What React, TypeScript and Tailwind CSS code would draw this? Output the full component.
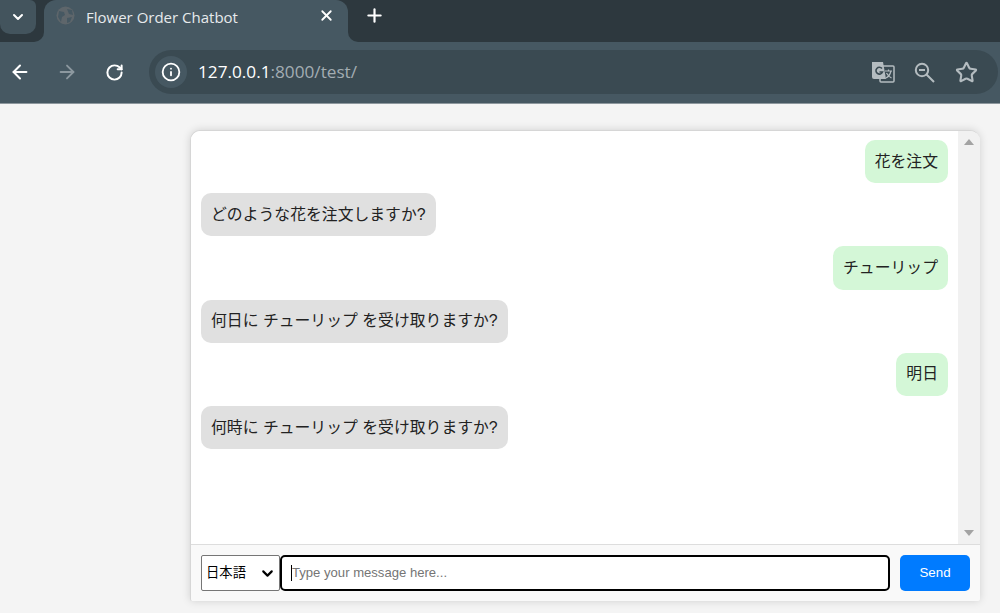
import { ArrowLeft, ArrowRight, ChevronDown, Info, Plus, RotateCw, Star, X } from "lucide-react";

type Message = {
  text: string;
  mine: boolean;
};

const messages: Message[] = [
  { text: "花を注文", mine: true },
  { text: "どのような花を注文しますか?", mine: false },
  { text: "チューリップ", mine: true },
  { text: "何日に チューリップ を受け取りますか?", mine: false },
  { text: "明日", mine: true },
  { text: "何時に チューリップ を受け取りますか?", mine: false },
];

function TranslateIcon() {
  return (
    <svg width="24" height="24" viewBox="0 0 24 24">
      <rect x="9" y="6" width="14" height="16" rx="1" fill="none" stroke="#b4bcc0" strokeWidth="1.5" />
      <path d="M1 2h11l3 17H3a2 2 0 0 1-2-2z" fill="#b4bcc0" />
      <path d="M11 8.5A3.4 3.4 0 1 0 11.5 12H8.5" fill="none" stroke="#3a4a52" strokeWidth="1.6" />
      <path d="M14 11h7M17.5 9.5v1.5M20 11c-1 4-3 6-5 7M15.5 13c1 2 3 4 5 5" fill="none" stroke="#b4bcc0" strokeWidth="1.2" />
    </svg>
  );
}

function ZoomOutIcon() {
  return (
    <svg width="23" height="23" viewBox="0 0 23 23" className="ml-[18px]" fill="none" stroke="#b4bcc0" strokeWidth="2">
      <circle cx="9" cy="9" r="6.2" />
      <path d="M6 9h6M13.5 13.5l7.5 7.5" />
    </svg>
  );
}

function ChromeBar() {
  return (
    <header className="shrink-0 font-['Open_Sans',sans-serif]">
      <div className="flex h-[42px] bg-[#2d383e]">
        <div className="flex h-[34px] w-[36px] items-center justify-center rounded-b-[10px] rounded-tr-[6px] bg-[#43545d] text-white">
          <ChevronDown size={16} strokeWidth={3} />
        </div>
        <div className="relative ml-2 flex h-[42px] w-[304px] items-center rounded-t-[12px] bg-[#465862] pb-[11px] pl-[12px] pr-[13px]">
          <span className="absolute bottom-0 left-[-10px] h-[10px] w-[10px] bg-[#465862]">
            <span className="block h-full w-full rounded-br-[10px] bg-[#2d383e]" />
          </span>
          <span className="absolute bottom-0 right-[-10px] h-[10px] w-[10px] bg-[#465862]">
            <span className="block h-full w-full rounded-bl-[10px] bg-[#2d383e]" />
          </span>
          <svg width="19" height="19" viewBox="0 0 19 19">
            <circle cx="9.5" cy="9.5" r="9" fill="#5e666b" />
            <path d="M3 5l5 1 1 3-3 2-1 5-3-5zM11 3l5 1 1 5-4-1zM11 12l5-1-2 5-3 1z" fill="#465862" />
          </svg>
          <span className="ml-[11px] mt-[3px] flex-1 text-[15px] text-[#e6eaec]">Flower Order Chatbot</span>
          <X size={17} color="#ffffff" strokeWidth={2.5} />
        </div>
        <div className="ml-[16px] flex items-center pb-[12px] text-white">
          <Plus size={21} strokeWidth={2.5} />
        </div>
      </div>
      <div className="flex h-[61px] items-center bg-[#465862] pb-[1px]">
        <div className="flex w-[149px] items-center pl-[9px]">
          <ArrowLeft size={22} color="#ffffff" strokeWidth={2.2} />
          <ArrowRight size={22} color="#8c989f" strokeWidth={2} className="ml-[25px]" />
          <RotateCw size={19} color="#ffffff" strokeWidth={2.5} className="ml-[27px]" />
        </div>
        <div className="mr-[2px] flex h-[44px] flex-1 items-center rounded-[22px] bg-[#3a4a52] pl-[6px] pr-[20px]">
          <div className="flex h-[32px] w-[32px] items-center justify-center rounded-full bg-[#465862]">
            <Info size={20} color="#ffffff" strokeWidth={2.2} />
          </div>
          <span className="ml-[11px] flex-1 text-[17.2px] text-white">
            127.0.0.1<span className="text-[#a3adb2]">:8000/test/</span>
          </span>
          <TranslateIcon />
          <ZoomOutIcon />
          <Star size={23} color="#b4bcc0" strokeWidth={2.2} className="ml-[19px]" />
        </div>
      </div>
      <div className="h-[1px] bg-[#8d979d]" />
    </header>
  );
}

export default function App() {
  return (
    <div className="flex h-[613px] w-[1000px] flex-col overflow-hidden bg-[#f4f4f4] font-['Liberation_Sans','Noto_Sans_CJK_JP',sans-serif]">
      <ChromeBar />
      <main className="flex flex-1 justify-end pb-[12px] pr-[20px] pt-[26px]">
        <div className="flex w-[790px] flex-col overflow-hidden rounded-b-[2px] rounded-t-[10px] border-l border-t border-[#d6d6d6] bg-[#f9f9f9] shadow-[0_0_8px_rgba(0,0,0,0.15)]">
          <div className="flex min-h-0 flex-1 border-b border-[#dddddd]">
            <div className="flex flex-1 flex-col gap-[10px] bg-white py-[9px] pl-[10px] pr-[10px]">
              {messages.map((msg) => (
                <div key={msg.text} className={msg.mine ? "flex justify-end" : "flex justify-start"}>
                  <div
                    className={`flex h-[43.2px] items-center rounded-[10px] px-[10px] text-[15.84px] text-[#222222] ${
                      msg.mine ? "bg-[#d4f7d7]" : "bg-[#e0e0e0]"
                    }`}
                  >
                    {msg.text}
                  </div>
                </div>
              ))}
            </div>
            <div className="flex w-[22px] flex-col items-center justify-between bg-[#f1f1f1] py-[8px]">
              <span className="h-0 w-0 border-x-[5px] border-b-[6px] border-x-transparent border-b-[#a3a3a3]" />
              <span className="h-0 w-0 border-x-[5px] border-t-[6px] border-x-transparent border-t-[#a3a3a3]" />
            </div>
          </div>
          <div className="flex h-[56px] shrink-0 items-center pl-[10px] pr-[10px]">
            <div className="flex h-[36px] w-[79px] items-center rounded-[2px] border border-[#767676] bg-white pl-[4px] text-[13.33px] text-black">
              <span className="flex-1">日本語</span>
              <ChevronDown size={17} strokeWidth={3} className="mr-[3px]" />
            </div>
            <div className="flex h-[36px] flex-1 items-center rounded-[5px] border-2 border-black bg-white pl-[9px] text-[13.1px] text-[#757575]">
              <span className="h-[16px] w-[1px] bg-black" />
              Type your message here...
            </div>
            <button className="ml-[10px] h-[36px] w-[70px] rounded-[5px] bg-[#007bff] text-[13.33px] text-white">
              Send
            </button>
          </div>
        </div>
      </main>
    </div>
  );
}
